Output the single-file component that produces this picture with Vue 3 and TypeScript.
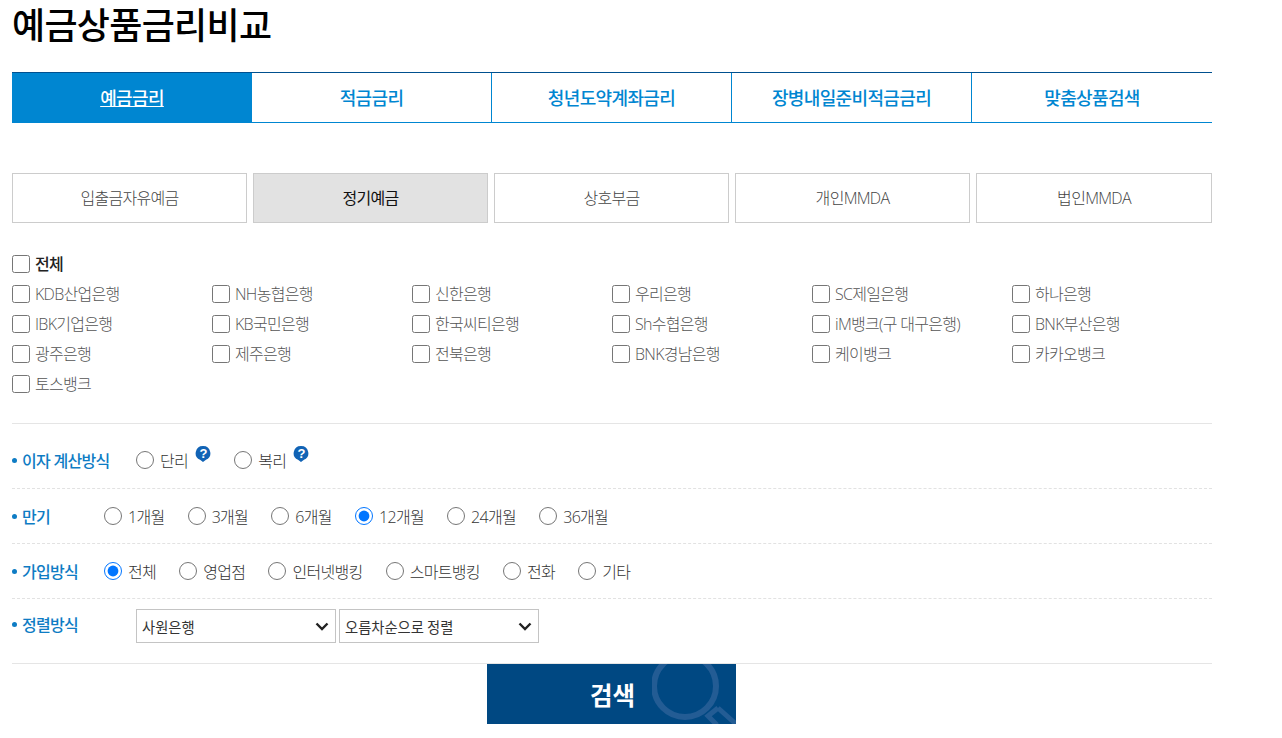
<script setup lang="ts">
const tabs: string[] = ['예금금리', '적금금리', '청년도약계좌금리', '장병내일준비적금금리', '맞춤상품검색']
const subs: string[] = ['입출금자유예금', '정기예금', '상호부금', '개인MMDA', '법인MMDA']
const banks: string[] = [
  'KDB산업은행', 'NH농협은행', '신한은행', '우리은행', 'SC제일은행', '하나은행',
  'IBK기업은행', 'KB국민은행', '한국씨티은행', 'Sh수협은행', 'iM뱅크(구 대구은행)', 'BNK부산은행',
  '광주은행', '제주은행', '전북은행', 'BNK경남은행', '케이뱅크', '카카오뱅크',
  '토스뱅크',
]
const terms: string[] = ['1개월', '3개월', '6개월', '12개월', '24개월', '36개월']
const joins: string[] = ['전체', '영업점', '인터넷뱅킹', '스마트뱅킹', '전화', '기타']
</script>

<template>
  <main class="page">
    <h1 class="title">예금상품금리비교</h1>

    <nav class="tabs">
      <a v-for="(t, i) in tabs" :key="t" class="tab" :class="{ on: i === 0 }">{{ t }}</a>
    </nav>

    <nav class="subs">
      <a v-for="(s, i) in subs" :key="s" class="sub" :class="{ on: i === 1 }">{{ s }}</a>
    </nav>

    <section class="banks">
      <label class="check all"><input type="checkbox" /><span>전체</span></label>
      <div class="bank-grid">
        <label v-for="b in banks" :key="b" class="check"><input type="checkbox" /><span>{{ b }}</span></label>
      </div>
    </section>

    <section class="form">
      <div class="row first">
        <span class="name wide">이자 계산방식</span>
        <label class="radio"><input type="radio" name="calc" /><span>단리</span>
          <svg class="help" viewBox="0 0 16 18" width="16" height="18">
            <path d="M8 1a7.2 7.2 0 0 0-3 13.8L8 17l3-2.2A7.2 7.2 0 0 0 8 1z" fill="#1163b5" />
            <text x="8" y="12.6" text-anchor="middle" class="help-q">?</text>
          </svg>
        </label>
        <label class="radio"><input type="radio" name="calc" /><span>복리</span>
          <svg class="help" viewBox="0 0 16 18" width="16" height="18">
            <path d="M8 1a7.2 7.2 0 0 0-3 13.8L8 17l3-2.2A7.2 7.2 0 0 0 8 1z" fill="#1163b5" />
            <text x="8" y="12.6" text-anchor="middle" class="help-q">?</text>
          </svg>
        </label>
      </div>
      <div class="row">
        <span class="name">만기</span>
        <label v-for="t in terms" :key="t" class="radio"><input type="radio" name="term" :checked="t === '12개월'" /><span>{{ t }}</span></label>
      </div>
      <div class="row">
        <span class="name">가입방식</span>
        <label v-for="j in joins" :key="j" class="radio"><input type="radio" name="join" :checked="j === '전체'" /><span>{{ j }}</span></label>
      </div>
      <div class="row last">
        <span class="name wide">정렬방식</span>
        <div class="pick">
          <select><option>사원은행</option></select>
          <svg class="chev" viewBox="0 0 14 9" width="14" height="9"><path d="M1.5 1.5L7 7l5.5-5.5" fill="none" stroke="#222" stroke-width="2.4" /></svg>
        </div>
        <div class="pick">
          <select><option>오름차순으로 정렬</option></select>
          <svg class="chev" viewBox="0 0 14 9" width="14" height="9"><path d="M1.5 1.5L7 7l5.5-5.5" fill="none" stroke="#222" stroke-width="2.4" /></svg>
        </div>
      </div>
    </section>

    <div class="actions">
      <button class="search" type="button">
        <span>검색</span>
        <svg class="glass" viewBox="0 0 84 60" width="84" height="60">
          <circle cx="33" cy="22" r="31" fill="none" stroke="#235c94" stroke-width="6" />
          <path d="M66 44L56 52l9 9M66 44l18 16" fill="none" stroke="#235c94" stroke-width="5" />
        </svg>
      </button>
    </div>
  </main>
</template>

<style scoped>
.page {
  width: 1200px;
  margin-left: 12px;
  font-family: "Open Sans", "Noto Sans CJK KR", sans-serif;
  font-size: 16px;
  letter-spacing: -0.7px;
  font-weight: 300;
  color: #333;
}
.title {
  margin: 0;
  height: 72px;
  font-family: "Noto Sans CJK KR", sans-serif;
  font-size: 36px;
  letter-spacing: -0.7px;
  line-height: 46px;
  font-weight: 500;
  color: #000;
}
.tabs {
  display: flex;
  height: 51px;
  box-sizing: border-box;
  border-top: 1px solid #00508f;
  border-bottom: 1px solid #0086d1;
}
.tab {
  flex: 0 0 240px;
  box-sizing: border-box;
  height: 49px;
  line-height: 51px;
  text-align: center;
  font-size: 18px;
  letter-spacing: -0.65px;
  font-weight: 500;
  color: #0086d1;
  border-right: 1px solid #0086d1;
}
.tab:last-child {
  border-right: 0;
}
.tab.on {
  height: 50px;
  background: #0086d1;
  color: #fff;
  border-right: 0;
  text-decoration: underline;
}
.subs {
  display: flex;
  gap: 6px;
  margin-top: 50px;
}
.sub {
  flex: 0 0 235px;
  box-sizing: border-box;
  height: 50px;
  line-height: 48px;
  text-align: center;
  border: 1px solid #ccc;
  color: #444;
}
.sub:last-child {
  flex: 1;
}
.sub.on {
  background: #e2e2e2;
  color: #111;
  font-weight: 400;
}
.banks {
  margin-top: 26px;
  height: 174px;
  border-bottom: 1px solid #e5e5e5;
}
.check {
  display: flex;
  align-items: center;
  height: 30px;
  color: #555;
}
.check input {
  width: 18px;
  height: 18px;
  margin: 0 5px 0 0;
}
.check span {
  margin-top: -2px;
}
.all {
  color: #222;
  font-weight: 500;
}
.bank-grid {
  display: grid;
  grid-template-columns: repeat(6, 200px);
  grid-auto-rows: 30px;
}
.row {
  display: flex;
  align-items: center;
  height: 55px;
  box-sizing: border-box;
  border-bottom: 1px dashed #e2e2e2;
}
.row.first {
  height: 65px;
  padding-top: 8px;
}
.row.last {
  height: 65px;
  padding-bottom: 10px;
  border-bottom: 1px solid #e5e5e5;
}
.name {
  flex: 0 0 92px;
  box-sizing: border-box;
  padding-left: 10px;
  position: relative;
  font-weight: 500;
  color: #0e7cc4;
}
.name.wide {
  flex-basis: 124px;
}
.name::before {
  content: "";
  position: absolute;
  left: 0;
  top: 50%;
  width: 5px;
  height: 5px;
  margin-top: -2px;
  border-radius: 50%;
  background: #0e7cc4;
}
.row.last .name {
  margin-top: -5px;
}
.radio {
  display: flex;
  align-items: center;
  margin-right: 23.2px;
  color: #333;
}
.radio input {
  width: 18px;
  height: 18px;
  margin: 0 6px 0 0;
}
.help {
  margin: -12px 0 0 7px;
}
.help-q {
  font-family: "Liberation Sans", sans-serif;
  font-size: 13px;
  font-weight: 700;
  fill: #fff;
}
.pick {
  position: relative;
  width: 200px;
  height: 34px;
  margin-right: 3px;
}
.pick select {
  appearance: none;
  display: block;
  width: 100%;
  height: 100%;
  padding: 0 0 0 5px;
  background: #fff;
  border: 1px solid #c4c4c4;
  border-radius: 0;
  font-family: "Noto Sans CJK KR", sans-serif;
  font-size: 14.3px;
  font-weight: 400;
  color: #333;
}
.chev {
  position: absolute;
  right: 7px;
  top: 13px;
  pointer-events: none;
}
.actions {
  display: flex;
  justify-content: center;
}
.search {
  position: relative;
  width: 249px;
  height: 60px;
  margin-left: -1px;
  padding: 0 0 0 2px;
  border: 0;
  overflow: hidden;
  background: #004882;
  color: #fff;
  font-family: "Noto Sans CJK KR", sans-serif;
  font-size: 24.5px;
  font-weight: 700;
}
.search span {
  position: relative;
  z-index: 1;
}
.glass {
  position: absolute;
  right: 0;
  top: 0;
}
</style>
